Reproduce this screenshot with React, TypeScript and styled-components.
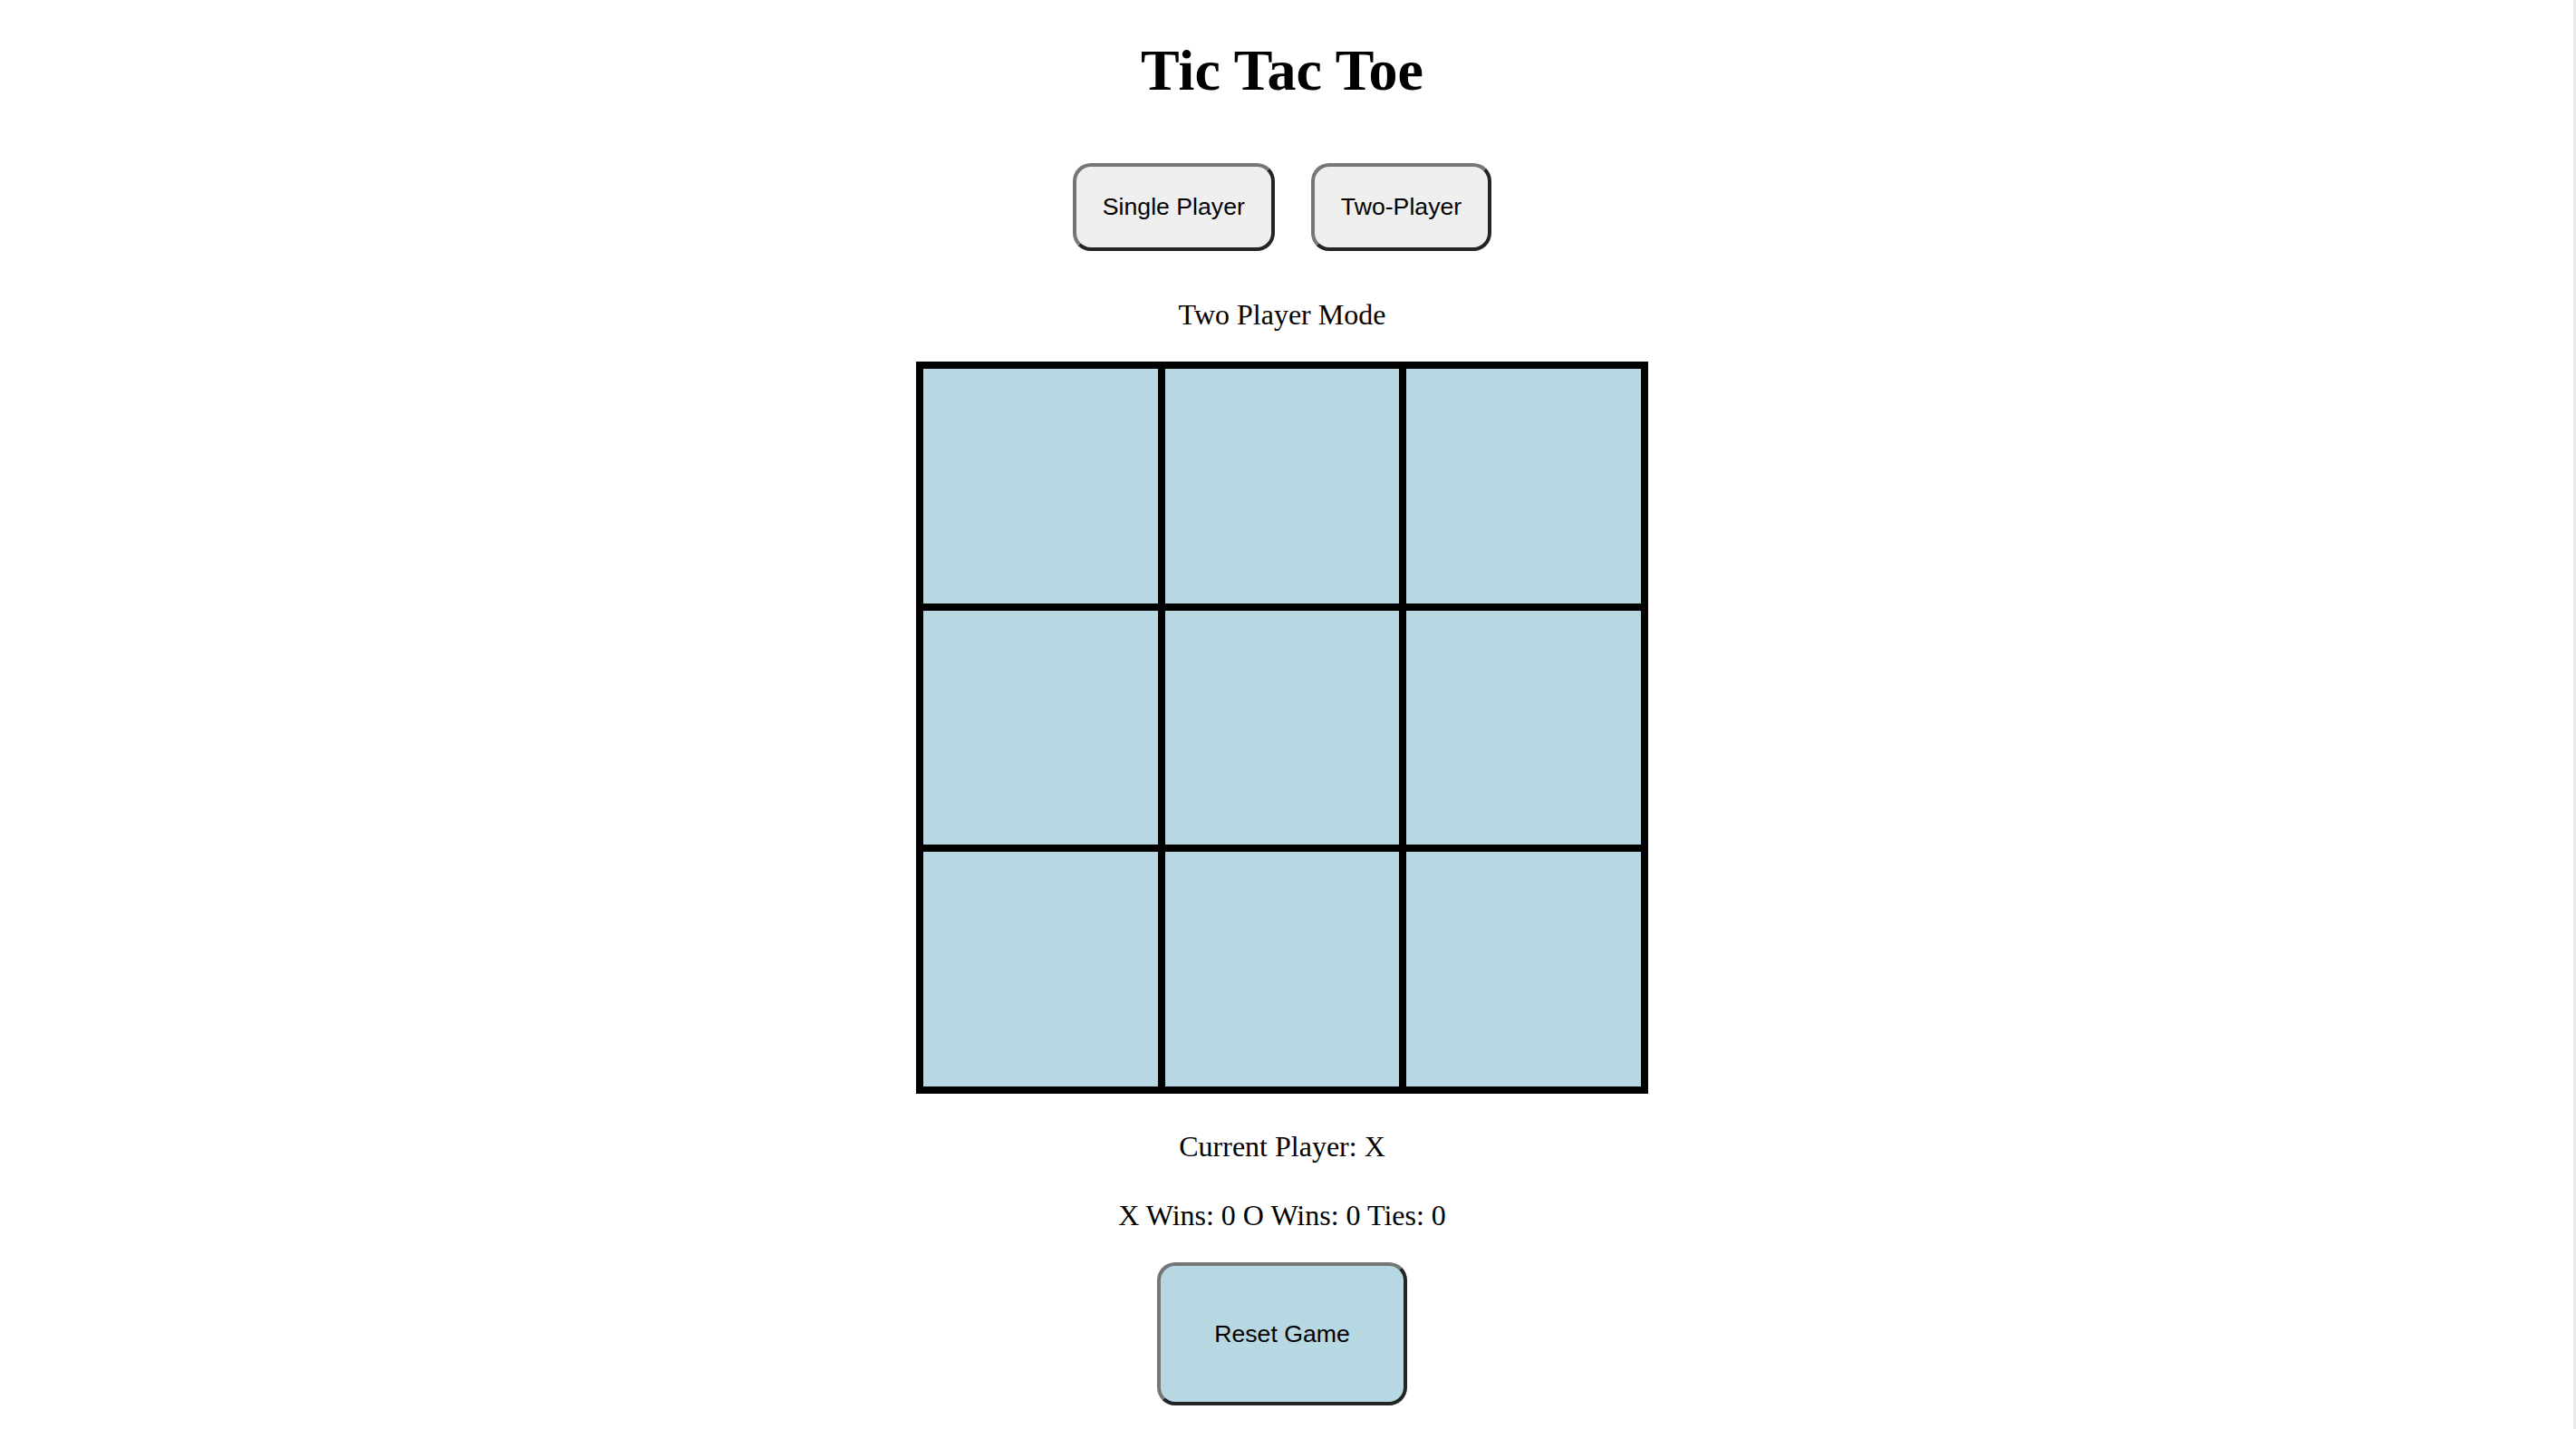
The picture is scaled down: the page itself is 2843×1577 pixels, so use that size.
import React, { useState } from "react";
import styled, { createGlobalStyle } from "styled-components";

const GlobalStyle = createGlobalStyle`
  html, body {
    margin: 0;
    padding: 0;
    background: #ffffff;
  }
  body {
    font-family: "Liberation Serif", "Times New Roman", serif;
    color: #000000;
  }
  * {
    box-sizing: border-box;
  }
`;

const Shell = styled.div`
  display: flex;
  min-height: 100vh;
`;

const Main = styled.main`
  flex: 1;
  display: flex;
  flex-direction: column;
  align-items: center;
  padding-bottom: 26px;
`;

const ScrollTrack = styled.div`
  flex: none;
  width: 13px;
  background: linear-gradient(to right, #ffffff 10px, #e9e9e9 10px);
`;

const Title = styled.h1`
  margin: 41px 0 0;
  font-family: "Liberation Serif", "Times New Roman", serif;
  font-size: 64px;
  line-height: 74px;
  font-weight: bold;
`;

const ModeBar = styled.div`
  display: flex;
  gap: 40px;
  margin-top: 65px;
`;

const PlainButton = styled.button<{ $tone: "grey" | "blue" }>`
  margin: 0;
  font-family: "Liberation Sans", Arial, sans-serif;
  font-size: 26.67px;
  color: #000000;
  background: ${(p) => (p.$tone === "blue" ? "#b7d8e3" : "#efefef")};
  border: 4px solid;
  border-color: #767676 #242424 #242424 #767676;
  border-radius: 20px;
  cursor: pointer;
`;

const ModeButton = styled(PlainButton)`
  line-height: 33px;
  padding: 28px 29px;
`;

const ResetButton = styled(PlainButton)`
  line-height: 34px;
  padding: 58px 59px;
  margin-top: 33px;
`;

const StatusLine = styled.p<{ $gap: number }>`
  margin: ${(p) => p.$gap}px 0 0;
  font-size: 32px;
  line-height: 37px;
`;

const Board = styled.div`
  margin-top: 33px;
  width: 808px;
  height: 808px;
  border: 4px solid #000000;
  display: grid;
  grid-template-columns: repeat(3, 1fr);
  grid-template-rows: repeat(3, 1fr);
`;

const Cell = styled.button`
  margin: 0;
  padding: 0;
  border: 4px solid #000000;
  background: #b7d8e3;
  font-family: "Liberation Sans", Arial, sans-serif;
  font-size: 96px;
  color: #000000;
  cursor: pointer;
`;

export default function App() {
  const [cells, setCells] = useState<string[]>(Array(9).fill(""));
  const [player, setPlayer] = useState<"X" | "O">("X");
  const [mode, setMode] = useState<"single" | "two">("two");

  const play = (i: number) => {
    if (cells[i]) return;
    const next = cells.slice();
    next[i] = player;
    setCells(next);
    setPlayer(player === "X" ? "O" : "X");
  };

  const reset = () => {
    setCells(Array(9).fill(""));
    setPlayer("X");
  };

  return (
    <Shell>
      <GlobalStyle />
      <Main>
        <Title>Tic Tac Toe</Title>
        <ModeBar>
          <ModeButton $tone="grey" onClick={() => setMode("single")}>
            Single Player
          </ModeButton>
          <ModeButton $tone="grey" onClick={() => setMode("two")}>
            Two-Player
          </ModeButton>
        </ModeBar>
        <StatusLine $gap={52}>
          {mode === "two" ? "Two Player Mode" : "Single Player Mode"}
        </StatusLine>
        <Board>
          {cells.map((c, i) => (
            <Cell key={i} onClick={() => play(i)}>
              {c}
            </Cell>
          ))}
        </Board>
        <StatusLine $gap={40}>Current Player: {player}</StatusLine>
        <StatusLine $gap={39}>X Wins: 0 O Wins: 0 Ties: 0</StatusLine>
        <ResetButton $tone="blue" onClick={reset}>
          Reset Game
        </ResetButton>
      </Main>
      <ScrollTrack />
    </Shell>
  );
}
